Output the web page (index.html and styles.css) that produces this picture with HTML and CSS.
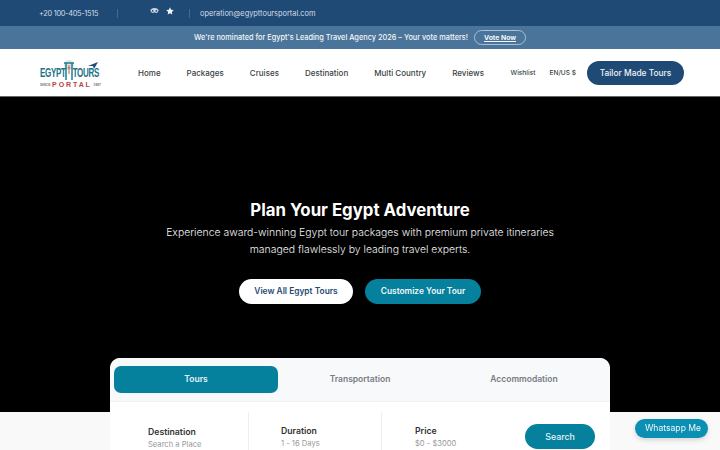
FILE: index.html
```html
<!DOCTYPE html>
<html lang="en">
<head>
    <meta charset="UTF-8">
    <meta name="viewport" content="width=device-width, initial-scale=1.0">
    <title>Egypt Tours Portal</title>
    <link rel="stylesheet" href="styles.css">
</head>
<body>
    <div class="topbar">
        <span class="phone">+20 100-405-1515</span>
        <span class="divider"></span>
        <div class="social">
            <svg width="9" height="6" viewBox="0 0 10 7"><path d="M0 2.500 1.200 1.200C3.500-.3 6.500-.3 8.800 1.200L10 2.500 9.500 3.200A2.500 2.500 0 0 1 5.200 5L5 5.500 4.800 5A2.500 2.500 0 0 1 .5 3.200Z" fill="#c9d6e2"/><circle cx="2.800" cy="3.400" r="1" fill="#1f4a75"/><circle cx="7.200" cy="3.400" r="1" fill="#1f4a75"/></svg>
            <svg width="8" height="8" viewBox="0 0 24 24"><path d="M12 1l3.400 7.300 7.900 1-5.800 5.500 1.500 7.900L12 18.800l-7 3.900 1.500-7.900L.7 9.300l7.900-1z" fill="#f2f5f8"/></svg>
        </div>
        <span class="divider"></span>
        <span class="email">operation@egypttoursportal.com</span>
    </div>

    <div class="notice">
        <span>We're nominated for Egypt's Leading Travel Agency 2026 – Your vote matters!</span>
        <a class="vote-btn" href="#">Vote Now</a>
    </div>

    <nav class="navbar">
        <a class="logo" href="#">
            <div class="logo-top">
                <span class="logo-word">EGYPT</span>
                <svg class="logo-mark" width="10" height="20" viewBox="0 0 10 20"><circle cx="5" cy="5" r="5" fill="#e3e3e6"/><path d="M0 3h10M2 3v17M8 3v17" stroke="#1c7f92" stroke-width="1.500" fill="none"/><path d="M5 5v9M3.500 8h3" stroke="#c9603f" stroke-width="1" fill="none"/></svg>
                <span class="logo-word">TOURS</span>
                <svg class="logo-plane" width="10" height="9" viewBox="0 0 10 9"><path d="M0 5l10-4-4 7-1-3z" fill="#1f4a75"/></svg>
            </div>
            <div class="logo-bottom">
                <span class="logo-year">SINCE</span>
                <span class="logo-portal">PORTAL</span>
                <span class="logo-year">1997</span>
            </div>
        </a>
        <div class="nav-links">
            <a href="#">Home</a>
            <a href="#">Packages</a>
            <a href="#">Cruises</a>
            <a href="#">Destination</a>
            <a href="#">Multi Country</a>
            <a href="#">Reviews</a>
        </div>
        <div class="nav-right">
            <a href="#">Wishlist</a>
            <a href="#">EN/US $</a>
            <a class="tailor-btn" href="#">Tailor Made Tours</a>
        </div>
    </nav>

    <section class="hero">
        <h1>Plan Your Egypt Adventure</h1>
        <p>Experience award-winning Egypt tour packages with premium private itineraries<br>managed flawlessly by leading travel experts.</p>
        <div class="hero-buttons">
            <a class="btn-white" href="#">View All Egypt Tours</a>
            <a class="btn-teal" href="#">Customize Your Tour</a>
        </div>
    </section>

    <div class="search-card">
        <div class="tabs">
            <div class="tab active">Tours</div>
            <div class="tab">Transportation</div>
            <div class="tab">Accommodation</div>
        </div>
        <div class="search-row">
            <div class="field">
                <div class="field-label">Destination</div>
                <div class="field-value">Search a Place</div>
            </div>
            <div class="field">
                <div class="field-label">Duration</div>
                <div class="field-value">1 - 16 Days</div>
            </div>
            <div class="field">
                <div class="field-label">Price</div>
                <div class="field-value">$0 - $3000</div>
            </div>
            <a class="search-btn" href="#">Search</a>
        </div>
    </div>

    <a class="whatsapp" href="#">Whatsapp Me</a>
</body>
</html>
```

FILE: styles.css
```css
html, body {
    height: 450px;
    overflow: hidden;
}
body {
    margin: 0;
    font-family: Inter, "Open Sans", sans-serif;
    background: #f9f9f9;
}
a {
    color: inherit;
    text-decoration: none;
}
.topbar {
    display: flex;
    align-items: center;
    height: 26px;
    padding-left: 39px;
    background: #1f4a75;
    color: #d3deE8;
    font-size: 7.400px;
}
.phone {
    width: 78px;
    letter-spacing: -0.3px;
}
.divider {
    width: 1px;
    height: 9px;
    background: #3f6a92;
}
.social {
    display: flex;
    align-items: center;
    gap: 7px;
    width: 71px;
    height: 14px;
    padding-left: 32px;
    box-sizing: border-box;
    margin-top: -4px;
}
.email {
    margin-left: 10px;
}
.notice {
    display: flex;
    justify-content: center;
    align-items: center;
    gap: 6px;
    height: 23px;
    background: #4a7499;
    color: #f4f7fa;
    font-size: 7.350px;
    font-weight: 500;
}
.vote-btn {
    width: 50px;
    height: 13px;
    line-height: 13px;
    border: 1px solid #a9c0d4;
    border-radius: 8px;
    font-size: 6.800px;
    font-weight: 700;
    text-align: center;
    text-decoration: underline;
}
.navbar {
    display: flex;
    align-items: center;
    height: 47px;
    padding-left: 40px;
    background: #fff;
    border-bottom: 1px solid #666;
    color: #3a3f45;
    white-space: nowrap;
}
.logo {
    display: block;
    width: 61px;
    margin-top: 2px;
}
.logo-top {
    position: relative;
    display: flex;
    align-items: flex-end;
    height: 21px;
    font-family: "Liberation Sans", sans-serif;
    font-size: 8px;
    font-weight: 700;
    line-height: 8px;
    color: #1c7288;
}
.logo-word {
    letter-spacing: -0.3px;
    transform: scaleY(1.500);
    transform-origin: bottom;
}
.logo-mark {
    flex-shrink: 0;
    margin: 0 -1px 0 -2px;
}
.logo-plane {
    position: absolute;
    right: 3px;
    top: 2px;
}
.logo-bottom {
    display: flex;
    align-items: center;
    justify-content: space-between;
    margin-top: 1px;
    font-family: "Liberation Sans", sans-serif;
    color: #777;
}
.logo-year {
    font-size: 3.500px;
    font-weight: 700;
}
.logo-portal {
    font-size: 7px;
    font-weight: 700;
    letter-spacing: 1.900px;
    color: #b8433f;
}
.nav-links {
    display: flex;
    gap: 26px;
    margin-left: 37px;
    font-size: 8px;
    font-weight: 500;
}
.nav-right {
    display: flex;
    align-items: center;
    margin-left: auto;
    margin-right: 36px;
    font-size: 6.600px;
    font-weight: 500;
}
.nav-right a + a {
    margin-left: 14px;
}
.nav-right .tailor-btn {
    width: 97px;
    height: 24px;
    margin-left: 11px;
    line-height: 24px;
    text-align: center;
    border-radius: 12px;
    background: #1f4a75;
    color: #eef3f7;
    font-size: 8.400px;
}
.hero {
    display: flex;
    flex-direction: column;
    align-items: center;
    height: 315px;
    background: #000;
    color: #fff;
    text-align: center;
}
.hero h1 {
    margin: 103px 0 0;
    font-size: 16.800px;
    font-weight: 700;
    line-height: 20px;
}
.hero p {
    margin: 4px 0 0;
    font-size: 10.450px;
    font-weight: 300;
    line-height: 17px;
    color: #f2f2f2;
}
.hero-buttons {
    display: flex;
    gap: 12px;
    margin-top: 21px;
}
.btn-white, .btn-teal {
    height: 25px;
    line-height: 25px;
    border-radius: 13px;
    font-size: 8.400px;
    font-weight: 600;
}
.btn-white {
    width: 114px;
    background: #fff;
    color: #1f4a75;
}
.btn-teal {
    width: 116px;
    background: #05809d;
    color: #f2f7f9;
}
.search-card {
    position: relative;
    width: 500px;
    margin: -54px auto 0;
    border-radius: 10px 10px 0 0;
    background: #fff;
}
.tabs {
    display: grid;
    grid-template-columns: repeat(3, 1fr);
    height: 44px;
    padding: 8px 4px 0;
    box-sizing: border-box;
    border-radius: 10px 10px 0 0;
    background: #f8f9fb;
    border-bottom: 1px solid #f0f1f3;
    color: #777c82;
    font-size: 8.500px;
    font-weight: 600;
}
.tab {
    height: 27px;
    line-height: 26px;
    text-align: center;
    border-radius: 7px;
}
.tab.active {
    background: #05809d;
    color: #e9f3f6;
}
.search-row {
    display: flex;
    align-items: flex-start;
    height: 60px;
    padding-top: 10px;
    box-sizing: border-box;
}
.field {
    width: 139px;
    height: 50px;
    padding: 14px 0 0 38px;
    box-sizing: border-box;
    border-right: 1px solid #eceef0;
}
.field:nth-child(2) {
    width: 133px;
    padding-left: 32px;
    padding-top: 13px;
}
.field:nth-child(3) {
    width: 143px;
    border-right: none;
    padding-left: 33px;
    padding-top: 13px;
}
.field-label {
    font-size: 8.700px;
    font-weight: 600;
    line-height: 13px;
    color: #333;
}
.field-value {
    font-size: 7.600px;
    line-height: 11px;
    color: #999;
}
.search-btn {
    width: 70px;
    height: 25px;
    margin-top: 12px;
    line-height: 25px;
    border-radius: 13px;
    background: #05809d;
    color: #e9f3f6;
    font-size: 8.800px;
    font-weight: 500;
    text-align: center;
}
.whatsapp {
    position: fixed;
    right: 12px;
    top: 419px;
    width: 73px;
    height: 19px;
    padding-left: 3px;
    box-sizing: border-box;
    line-height: 18px;
    border-radius: 10px;
    background: #0b8fb3;
    color: #eef7fa;
    font-size: 8.600px;
    text-align: center;
    box-shadow: 0 2px 5px rgba(0,0,0,0.15);
}
```
